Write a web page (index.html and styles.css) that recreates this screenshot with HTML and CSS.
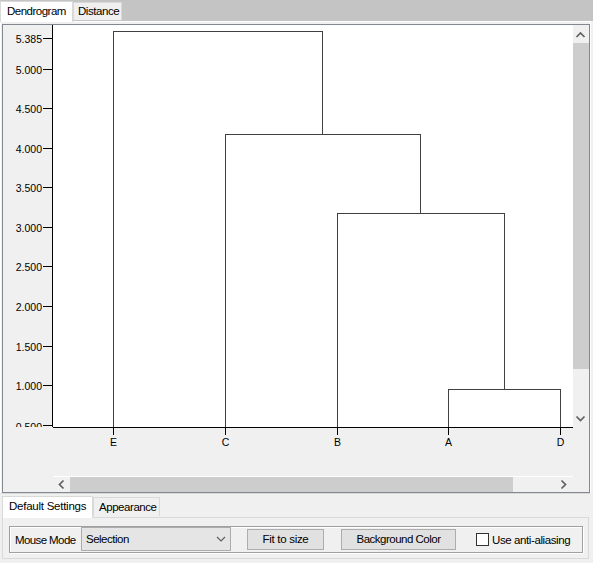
FILE: index.html
```html
<!DOCTYPE html>
<html>
<head>
<meta charset="utf-8">
<link rel="stylesheet" href="styles.css">
</head>
<body>
<div class="app">
  <div class="tabstrip">
    <div class="tab tab-active">Dendrogram</div>
    <div class="tab">Distance</div>
  </div>
  <div class="tabpanel">
    <div class="scrollpane">
      <svg class="rowheader" width="50" height="402" viewBox="3 25 50 402">
        <g class="axis">
          <line x1="52.5" y1="25" x2="52.5" y2="427"/>
          <line x1="43" y1="38.5" x2="52" y2="38.5"/>
          <line x1="43" y1="69.5" x2="52" y2="69.5"/>
          <line x1="43" y1="108.5" x2="52" y2="108.5"/>
          <line x1="43" y1="148.5" x2="52" y2="148.5"/>
          <line x1="43" y1="187.5" x2="52" y2="187.5"/>
          <line x1="43" y1="227.5" x2="52" y2="227.5"/>
          <line x1="43" y1="266.5" x2="52" y2="266.5"/>
          <line x1="43" y1="306.5" x2="52" y2="306.5"/>
          <line x1="43" y1="346.5" x2="52" y2="346.5"/>
          <line x1="43" y1="385.5" x2="52" y2="385.5"/>
          <line x1="43" y1="425.5" x2="52" y2="425.5"/>
        </g>
        <g class="ticklabels ylabels">
          <text x="42" y="43">5.385</text>
          <text x="42" y="74">5.000</text>
          <text x="42" y="113">4.500</text>
          <text x="42" y="153">4.000</text>
          <text x="42" y="192">3.500</text>
          <text x="42" y="232">3.000</text>
          <text x="42" y="271">2.500</text>
          <text x="42" y="311">2.000</text>
          <text x="42" y="351">1.500</text>
          <text x="42" y="390">1.000</text>
          <text x="42" y="431">0.500</text>
        </g>
      </svg>
      <svg class="plot" width="520" height="402" viewBox="53 25 520 402">
        <g class="tree">
          <polyline points="113.5,427 113.5,31.5 322.5,31.5 322.5,134.5"/>
          <polyline points="225.5,427 225.5,134.5 420.5,134.5 420.5,213.5"/>
          <polyline points="337.5,427 337.5,213.5 504.5,213.5 504.5,389.5"/>
          <polyline points="448.5,427 448.5,389.5 560.5,389.5 560.5,427"/>
        </g>
      </svg>
      <div class="vscroll">
        <div class="sb-arrow sb-arrow-up">
          <svg width="16" height="18" viewBox="573 25 16 18"><polyline points="576.5,37 580.5,33 584.5,37"/></svg>
        </div>
        <div class="sb-thumb sb-thumb-v"></div>
        <div class="sb-track"></div>
        <div class="sb-arrow sb-arrow-down">
          <svg width="16" height="17" viewBox="573 409 16 17"><polyline points="576.5,415.5 580.5,419.5 584.5,415.5"/></svg>
        </div>
      </div>
      <div class="cell-gray"></div>
      <svg class="colheader" width="520" height="49" viewBox="53 427 520 49">
        <g class="axis">
          <line x1="53" y1="427.5" x2="573" y2="427.5"/>
          <line x1="113.5" y1="428" x2="113.5" y2="435"/>
          <line x1="225.5" y1="428" x2="225.5" y2="435"/>
          <line x1="337.5" y1="428" x2="337.5" y2="435"/>
          <line x1="448.5" y1="428" x2="448.5" y2="435"/>
          <line x1="560.5" y1="428" x2="560.5" y2="435"/>
        </g>
        <g class="ticklabels xlabels">
          <text x="113.5" y="446">E</text>
          <text x="225.5" y="446">C</text>
          <text x="337.5" y="446">B</text>
          <text x="448.5" y="446">A</text>
          <text x="560.5" y="446">D</text>
        </g>
      </svg>
      <div class="cell-gray"></div>
      <div class="cell-gray"></div>
      <div class="hscroll">
        <div class="sb-arrow sb-arrow-left">
          <svg width="17" height="15" viewBox="53 477 17 15"><polyline points="63.5,480.5 59.5,484.5 63.5,488.5"/></svg>
        </div>
        <div class="sb-thumb sb-thumb-h"></div>
        <div class="sb-track"></div>
        <div class="sb-arrow sb-arrow-right">
          <svg width="17" height="15" viewBox="556 477 17 15"><polyline points="561.5,480.5 565.5,484.5 561.5,488.5"/></svg>
        </div>
      </div>
      <div class="cell-gray"></div>
    </div>
  </div>
  <div class="bottomtabs">
    <div class="btab btab-active">Default Settings</div>
    <div class="btab">Appearance</div>
  </div>
  <div class="bottompanel">
    <div class="group">
      <span class="grouplabel">Mouse Mode</span>
      <div class="combo">
        <span class="combo-text">Selection</span>
        <svg class="combo-chev" width="10" height="6" viewBox="0 0 10 6"><polyline points="1,1 5,5 9,1"/></svg>
      </div>
      <div class="btn btn-fit">Fit to size</div>
      <div class="btn btn-bg">Background Color</div>
      <div class="check">
        <span class="checkbox"></span>
        <span class="check-label">Use anti-aliasing</span>
      </div>
    </div>
  </div>
</div>
</body>
</html>
```

FILE: styles.css
```css
html, body {
  margin: 0;
  padding: 0;
}
body {
  background: #f0f0f0;
  font-family: "Liberation Sans", Arial, sans-serif;
  font-size: 11.5px;
  letter-spacing: -0.45px;
  color: #000;
}
.app {
  width: 593px;
  height: 563px;
  overflow: hidden;
  position: relative;
}

/* top tabs */
.tabstrip {
  height: 21px;
  background: #c4c4c4;
  display: flex;
  align-items: flex-end;
}
.tab {
  box-sizing: border-box;
  height: 18px;
  width: 49px;
  background: #f0f0f0;
  border: 1px solid #d9d9d9;
  border-bottom: none;
  margin-bottom: 1px;
  padding-left: 4px;
  line-height: 17px;
  white-space: nowrap;
}
.tab-active {
  width: 73px;
  height: 21px;
  margin-bottom: -1px;
  background: #fff;
  padding-left: 6px;
  line-height: 18px;
  letter-spacing: -0.5px;
  position: relative;
  z-index: 1;
}

/* main tab panel */
.tabpanel {
  width: 591px;
  box-sizing: border-box;
  border: 1px solid #fff;
  border-bottom-color: #d9d9d9;
  padding: 2px 0 0 1px;
}
.scrollpane {
  width: 588px;
  box-sizing: border-box;
  border: 1px solid #828790;
  display: grid;
  grid-template-columns: 50px 520px 16px;
  grid-template-rows: 402px 49px 16px;
  background: #f0f0f0;
}
.rowheader, .plot, .colheader {
  display: block;
  shape-rendering: crispEdges;
}
.plot {
  background: #fff;
}
.axis line {
  stroke: #000;
  stroke-width: 1;
}
.tree polyline {
  fill: none;
  stroke: #404040;
  stroke-width: 1;
}
.ticklabels text {
  font-family: "Liberation Sans", Arial, sans-serif;
  font-size: 10.5px;
  letter-spacing: 0;
  fill: #000;
}
.ylabels text {
  text-anchor: end;
}
.xlabels text {
  text-anchor: middle;
}
.cell-gray {
  background: #f0f0f0;
}

/* scrollbars */
.vscroll {
  display: flex;
  flex-direction: column;
  background: #f0f0f0;
}
.hscroll {
  display: flex;
  background: #f0f0f0;
  border-top: 1px solid #fff;
}
.sb-arrow svg {
  display: block;
}
.sb-arrow polyline {
  fill: none;
  stroke: #606060;
  stroke-width: 1.7;
}
.sb-arrow-up { height: 18px; }
.sb-arrow-down { height: 17px; }
.sb-arrow-left, .sb-arrow-right { width: 17px; }
.sb-thumb { background: #cdcdcd; }
.sb-thumb-v { height: 326px; }
.sb-thumb-h { width: 443px; }
.sb-track { flex: 1; }

/* bottom tabs */
.bottomtabs {
  display: flex;
  align-items: flex-end;
  height: 22px;
  margin-top: 1px;
  padding-left: 2px;
}
.btab {
  box-sizing: border-box;
  height: 19px;
  width: 67px;
  background: #f0f0f0;
  border: 1px solid #d9d9d9;
  border-bottom: none;
  margin-bottom: 1px;
  padding-left: 5px;
  line-height: 18px;
  white-space: nowrap;
}
.btab-active {
  width: 91px;
  height: 22px;
  margin-bottom: -1px;
  background: #fff;
  padding-left: 6px;
  line-height: 19px;
  letter-spacing: -0.25px;
  position: relative;
  z-index: 1;
}
.bottompanel {
  margin-left: 2px;
  width: 587px;
  box-sizing: border-box;
  border: 1px solid #d9d9d9;
  padding: 8px 5px 5px 6px;
}
.group {
  box-sizing: border-box;
  height: 27px;
  border: 1px solid #a0a0a0;
  box-shadow: inset 1px 1px 0 #fff, 1px 1px 0 #fff;
  display: flex;
  align-items: center;
  padding-left: 5px;
}
.grouplabel {
  width: 66px;
  white-space: nowrap;
  letter-spacing: -0.6px;
}
.combo {
  box-sizing: border-box;
  width: 150px;
  height: 24px;
  margin-top: -1px;
  background: #e5e5e5;
  border: 1px solid #acacac;
  display: flex;
  align-items: center;
  padding: 0 4px 0 4px;
}
.combo-text {
  flex: 1;
  letter-spacing: -0.5px;
}
.combo-chev polyline {
  fill: none;
  stroke: #606060;
  stroke-width: 1.2;
}
.btn {
  box-sizing: border-box;
  height: 21px;
  background: #e1e1e1;
  border: 1px solid #adadad;
  text-align: center;
  line-height: 19px;
  white-space: nowrap;
}
.btn-fit {
  width: 77px;
  margin-left: 16px;
  letter-spacing: -0.3px;
}
.btn-bg {
  width: 115px;
  margin-left: 17px;
  letter-spacing: -0.5px;
}
.check {
  display: flex;
  align-items: center;
  margin-left: 20px;
}
.checkbox {
  box-sizing: border-box;
  width: 13px;
  height: 13px;
  background: #fff;
  border: 1px solid #333;
}
.check-label {
  margin-left: 3px;
  letter-spacing: -0.4px;
  white-space: nowrap;
}
```
